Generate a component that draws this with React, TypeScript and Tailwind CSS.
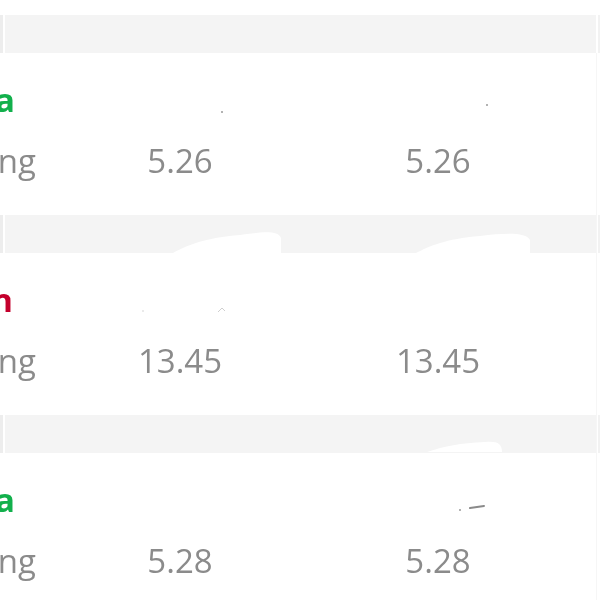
import React from "react";

const rows = [
  { label: "Alfa", color: "text-[#12b04c]", pr: "pr-[36px]", value: "5.26" },
  { label: "Down", color: "text-[#c4002c]", pr: "pr-[38px]", value: "13.45" },
  { label: "Alfa", color: "text-[#12b04c]", pr: "pr-[36px]", value: "5.28" },
];

function Row({ r }: { r: (typeof rows)[number] }) {
  return (
    <div className="h-[200px] pt-[15px]">
      <div className="flex h-[38px] gap-[2px]">
        <div className="w-[3px] bg-[#ededed]" />
        <div className="w-[591px] bg-[#f4f4f4]" />
        <div className="flex-1 bg-[#f2f2f2]" />
      </div>
      <div className="mt-[16px] grid grid-cols-[51px_258px_258px] text-[33px] leading-[61px]">
        <div className={`flex justify-end whitespace-nowrap font-bold ${r.pr} ${r.color}`}>
          <span>{r.label}</span>
        </div>
        <div />
        <div />
        <div className="flex justify-end whitespace-nowrap pr-[15px] text-[#8b8b8b]">
          <span>Rating</span>
        </div>
        <div className="text-center text-[#8b8b8b]">{r.value}</div>
        <div className="text-center text-[#8b8b8b]">{r.value}</div>
      </div>
    </div>
  );
}

export default function App() {
  return (
    <div
      className="relative h-[600px] w-[600px] overflow-hidden bg-white blur-[0.4px]"
      style={{ fontFamily: '"Open Sans", "Noto Sans", sans-serif' }}
    >
      {rows.map((r, i) => (
        <Row key={i} r={r} />
      ))}
      <svg
        className="pointer-events-none absolute left-0 top-0"
        width="600"
        height="600"
        viewBox="0 0 600 600"
      >
        <line x1="596.5" y1="53" x2="596.5" y2="600" stroke="#f6f6f6" strokeWidth="1" />
        <path d="M173 253 C190 244 205 238 240 235 C262 232 278 230 281 238 L281 253 Z" fill="#ffffff" />
        <path d="M416 253 C430 246 445 239 480 236 C505 233 526 232 530 240 L530 253 Z" fill="#ffffff" />
        <path d="M427 452 C445 446 460 443 485 442 C498 441 502 444 502 452 Z" fill="#ffffff" />
        <circle cx="222" cy="112" r="1" fill="#9a9a9a" />
        <circle cx="487" cy="105" r="1" fill="#9a9a9a" />
        <circle cx="143" cy="311" r="0.8" fill="#d0d0d0" />
        <path d="M218 312 L222 308 L225 311" stroke="#cfcfcf" strokeWidth="1" fill="none" />
        <circle cx="460" cy="510" r="1" fill="#9a9a9a" />
        <path d="M470 508 L484 506" stroke="#8a8a8a" strokeWidth="2" strokeLinecap="round" />
      </svg>
    </div>
  );
}
